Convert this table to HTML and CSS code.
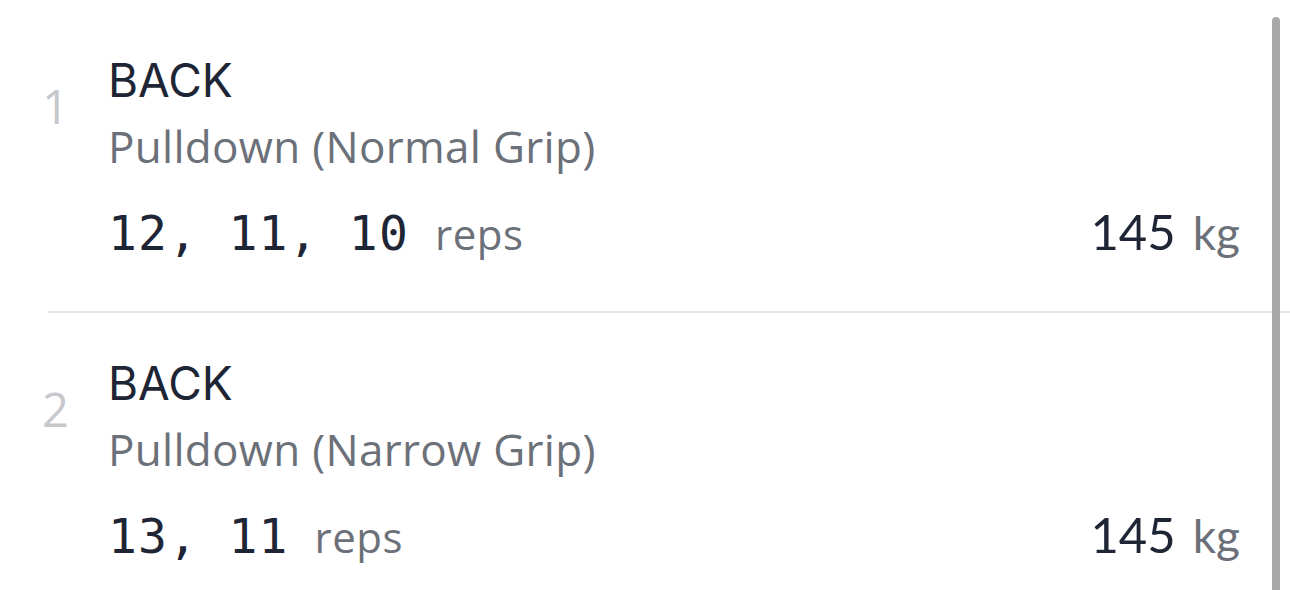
FILE: index.html
```html
<!DOCTYPE html>
<html>
<head>
<meta charset="utf-8">
<link rel="stylesheet" href="styles.css">
</head>
<body>
<div class="list">
  <div class="item">
    <div class="idx">1</div>
    <div class="body">
      <div class="group">BACK</div>
      <div class="name">Pulldown (Normal Grip)</div>
      <div class="metrics">
        <div class="reps"><span class="mono">12, 11, 10</span><span class="unit">reps</span></div>
        <div class="weight"><span class="num">145</span><span class="unit kg">kg</span></div>
      </div>
    </div>
  </div>
  <div class="item">
    <div class="idx">2</div>
    <div class="body">
      <div class="group">BACK</div>
      <div class="name">Pulldown (Narrow Grip)</div>
      <div class="metrics">
        <div class="reps"><span class="mono">13, 11</span><span class="unit">reps</span></div>
        <div class="weight"><span class="num">145</span><span class="unit kg">kg</span></div>
      </div>
    </div>
  </div>
</div>
<div class="scrollbar"></div>
</body>
</html>
```

FILE: styles.css
```css
html, body {
  margin: 0;
  padding: 0;
  background: #ffffff;
  overflow: hidden;
}
body {
  width: 1290px;
  height: 590px;
  position: relative;
  font-family: "Inter", "Liberation Sans", sans-serif;
}
.list {
  margin-left: 48px;
  padding-top: 10px;
  display: flex;
  flex-direction: column;
}
.item {
  display: flex;
  padding: 42px 50px 37px 0;
  border-bottom: 2px solid #e6e6e6;
}
.item:last-child {
  border-bottom: none;
}
.idx {
  width: 66px;
  margin-left: -6px;
  flex: none;
  font-family: "Open Sans", "Liberation Sans", sans-serif;
  font-size: 47px;
  line-height: 56px;
  padding-top: 26px;
  color: #c8c8cc;
  font-weight: 400;
}
.body {
  flex: 1;
  display: flex;
  flex-direction: column;
}
.group {
  font-size: 46px;
  line-height: 56px;
  color: #1e2535;
  font-weight: 400;
}
.name {
  font-family: "Open Sans", "Liberation Sans", sans-serif;
  font-size: 44px;
  letter-spacing: 0.3px;
  line-height: 60px;
  margin-top: 8px;
  color: #6b7079;
}
.metrics {
  display: flex;
  justify-content: space-between;
  align-items: baseline;
  margin-top: 25px;
  line-height: 60px;
}
.mono {
  font-family: "DejaVu Sans Mono", "Liberation Mono", monospace;
  font-size: 48px;
  letter-spacing: 1.2px;
  color: #1e2535;
}
.unit {
  font-family: "Open Sans", "Liberation Sans", sans-serif;
  font-size: 42px;
  letter-spacing: 0.5px;
  color: #6b7079;
  margin-left: 26px;
}
.num {
  font-family: "Lato", "Liberation Sans", sans-serif;
  font-size: 49px;
  color: #1e2535;
}
.kg {
  font-family: "Lato", "Liberation Sans", sans-serif;
  font-size: 46px;
  letter-spacing: 0;
  margin-left: 17px;
}
.scrollbar {
  position: absolute;
  left: 1272px;
  top: 17px;
  width: 8px;
  height: 600px;
  background: #a8a8a8;
  border-radius: 4px 4px 0 0;
}
```
